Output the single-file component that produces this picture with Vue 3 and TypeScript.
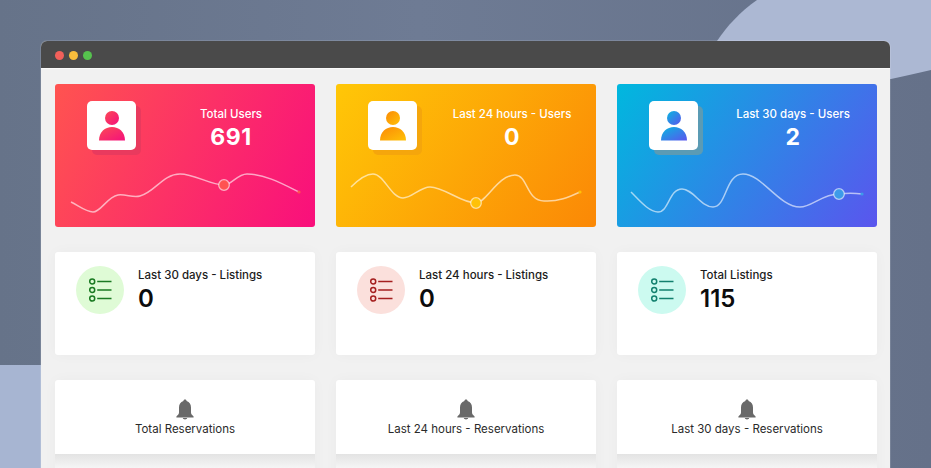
<script setup lang="ts">
type StatCard = {
  title: string
  value: string
  tone: string
  line: string
  dot: [number, number]
  end: [number, number]
}

type ListCard = {
  title: string
  value: string
  tone: string
}

const statCards: StatCard[] = [
  {
    title: 'Total Users',
    value: '691',
    tone: 'red',
    line: 'M16 118 C24 122 31 128 38 128 C46 128 52 113 63 111 C71 110 78 114 85 112 C100 108 108 90 125 90 C140 90 155 101 169 101 C177 101 182 90 192 90 C210 90 228 100 244 108',
    dot: [169, 101],
    end: [244, 108],
  },
  {
    title: 'Last 24 hours - Users',
    value: '0',
    tone: 'amber',
    line: 'M15 103 C22 96 29 90 37 90 C48 90 55 114 67 114 C76 114 84 103 94 103 C108 103 125 119 140 119 C150 119 162 91 179 91 C192 91 190 117 208 117 C222 118 233 113 244 108',
    dot: [140, 119],
    end: [244, 108],
  },
  {
    title: 'Last 30 days - Users',
    value: '2',
    tone: 'blue',
    line: 'M14 108 C22 116 32 128 41 128 C52 128 52 105 65 105 C76 105 84 123 96 123 C110 123 108 90 126 90 C145 90 162 123 183 123 C195 123 205 110 222 110 C230 109 237 109 245 110',
    dot: [222, 110],
    end: [245, 110],
  },
]

const listCards: ListCard[] = [
  { title: 'Last 30 days - Listings', value: '0', tone: 'green' },
  { title: 'Last 24 hours - Listings', value: '0', tone: 'rose' },
  { title: 'Total Listings', value: '115', tone: 'mint' },
]

const reservationCards: string[] = [
  'Total Reservations',
  'Last 24 hours - Reservations',
  'Last 30 days - Reservations',
]
</script>

<template>
  <div class="stage">
    <svg class="blob-top" viewBox="0 0 931 100" width="931" height="100">
      <path d="M757 0 C740 12 727 26 717 41 L717 80 L891 79 C905 76 918 73 931 70 L931 0 Z" fill="#acb8d3" />
    </svg>
    <div class="blob-bottom"></div>

    <div class="window">
      <div class="titlebar">
        <span class="light light-red"></span>
        <span class="light light-yellow"></span>
        <span class="light light-green"></span>
      </div>

      <div class="content">
        <div class="row">
          <div
            v-for="card in statCards"
            :key="card.title"
            class="stat-card"
            :class="`stat-${card.tone}`"
          >
            <svg class="spark" viewBox="0 0 260 142">
              <path :d="card.line" fill="none" stroke="rgba(255,255,255,0.6)" stroke-width="1.5" />
              <circle :cx="card.dot[0]" :cy="card.dot[1]" r="5.3" class="spark-dot" stroke="rgba(255,255,255,0.6)" stroke-width="1.3" />
              <circle :cx="card.end[0]" :cy="card.end[1]" r="1.6" class="spark-dot" />
            </svg>
            <div class="stat-top">
              <div class="avatar">
                <svg viewBox="0 0 28 30" width="28" height="30">
                  <defs>
                    <linearGradient :id="`grad-${card.tone}`" x1="0" y1="0" x2="1" y2="1">
                      <stop offset="0" class="grad-a" />
                      <stop offset="1" class="grad-b" />
                    </linearGradient>
                  </defs>
                  <circle cx="14" cy="7" r="7" :fill="`url(#grad-${card.tone})`" />
                  <path d="M1 29.5 C1 21 7 16 14 16 C21 16 27 21 27 29.5 Z" :fill="`url(#grad-${card.tone})`" />
                </svg>
              </div>
              <div class="stat-text">
                <div class="stat-title">{{ card.title }}</div>
                <div class="stat-value">{{ card.value }}</div>
              </div>
            </div>
          </div>
        </div>

        <div class="row">
          <div v-for="card in listCards" :key="card.title" class="list-card" :class="`list-${card.tone}`">
            <div class="list-icon">
              <svg viewBox="0 0 24 26" width="24" height="26" fill="none" stroke="currentColor" stroke-width="1.5">
                <circle cx="4.2" cy="4.4" r="2.5" />
                <circle cx="4.2" cy="13" r="2.5" />
                <circle cx="4.2" cy="21.6" r="2.5" />
                <path d="M9.2 4.4 H23.5 M9.2 13 H23.5 M9.2 21.6 H23.5" />
              </svg>
            </div>
            <div>
              <div class="list-title">{{ card.title }}</div>
              <div class="list-value">{{ card.value }}</div>
            </div>
          </div>
        </div>

        <div class="row">
          <div v-for="title in reservationCards" :key="title" class="res-card">
            <div class="res-head">
              <svg viewBox="0 0 18 20" width="18" height="21" fill="#696969">
                <path d="M9 0 C10 0 10.6 .7 10.6 1.6 C13.6 2.4 15 5 15 8 V13 C15 15 16.4 15.6 17.6 17 V18 H.4 V17 C1.6 15.6 3 15 3 13 V8 C3 5 4.4 2.4 7.4 1.6 C7.4 .7 8 0 9 0 Z" />
                <path d="M6.8 18.6 H11.2 C11 19.6 10.1 20 9 20 C7.9 20 7 19.6 6.8 18.6 Z" />
              </svg>
              <div class="res-title">{{ title }}</div>
            </div>
            <div class="res-body"></div>
          </div>
        </div>
      </div>
    </div>
  </div>
</template>

<style>
html,
body {
  margin: 0;
  background: #6b7890;
}
</style>

<style scoped>
.stage {
  position: relative;
  width: 931px;
  height: 468px;
  overflow: hidden;
  padding: 41px 41px 0;
  box-sizing: border-box;
  background: linear-gradient(90deg, #667389 0%, #6e7b94 45%, #657189 100%);
  font-family: Inter, "Liberation Sans", sans-serif;
}

.blob-top {
  position: absolute;
  left: 0;
  top: 0;
}

.blob-bottom {
  position: absolute;
  left: 0;
  top: 365px;
  width: 60px;
  height: 103px;
  background: #a7b5d2;
}

.window {
  position: relative;
  width: 849px;
  height: 427px;
  border-radius: 6px 6px 0 0;
  overflow: hidden;
  background: #f1f1f1;
  box-shadow: 0 0 0 1px rgba(255, 255, 255, 0.12);
}

.titlebar {
  display: flex;
  align-items: center;
  gap: 5px;
  height: 28px;
  padding: 1px 0 0 14px;
  background: #4a4a4a;
  border-bottom: 1px solid #fafafa;
  box-sizing: border-box;
}

.light {
  width: 9px;
  height: 9px;
  border-radius: 50%;
}

.light-red {
  background: #f2605a;
}

.light-yellow {
  background: #f8bd3c;
}

.light-green {
  background: #56c24e;
}

.content {
  display: flex;
  flex-direction: column;
  gap: 25px;
  padding: 15px 14px 0;
}

.row {
  display: grid;
  grid-template-columns: repeat(3, 260px);
  column-gap: 21px;
}

.stat-card {
  position: relative;
  height: 143px;
  border-radius: 3px;
  overflow: hidden;
  color: #fff;
}

.stat-red {
  background: linear-gradient(115deg, #ff5350 0%, #f90f7c 100%);
  --a: #fb4a55;
  --b: #f5107c;
  --dot: #ff5350;
  --shade: #e93a5e;
}

.stat-amber {
  background: linear-gradient(125deg, #ffc707 0%, #fb8806 100%);
  --a: #fb8a06;
  --b: #ffc107;
  --dot: #ffc107;
  --shade: #f5a60c;
}

.stat-blue {
  background: linear-gradient(125deg, #00b8de 0%, #5a55ee 100%);
  --a: #08b7e0;
  --b: #5a55ee;
  --dot: #3d9be9;
  --shade: #5b9bb4;
}

.spark {
  position: absolute;
  left: 0;
  top: 0;
  width: 260px;
  height: 142px;
}

.spark-dot {
  fill: var(--dot);
}

.grad-a {
  stop-color: var(--a);
}

.grad-b {
  stop-color: var(--b);
}

.stat-top {
  position: relative;
  display: flex;
  padding: 17px 0 0 32px;
}

.avatar {
  display: flex;
  align-items: center;
  justify-content: center;
  width: 49px;
  height: 49px;
  border-radius: 5px;
  background: #fff;
  box-shadow: 5px 5px 0 var(--shade);
}

.stat-text {
  flex: 1;
  padding-left: 11px;
  text-align: center;
  margin-top: 5px;
}

.stat-title {
  font-size: 11.5px;
  font-weight: 500;
  line-height: 16px;
}

.stat-value {
  font-size: 23px;
  font-weight: 700;
  line-height: 30px;
  letter-spacing: 0.5px;
}

.list-card {
  display: flex;
  gap: 14px;
  height: 103px;
  padding: 14px 0 0 21px;
  box-sizing: border-box;
  border-radius: 3px;
  background: #fff;
  box-shadow: 0 0 14px rgba(0, 0, 0, 0.03);
}

.list-icon {
  display: flex;
  align-items: center;
  justify-content: center;
  width: 48px;
  height: 48px;
  border-radius: 50%;
}

.list-green .list-icon {
  background: #dffbd6;
  color: #1a7a22;
}

.list-rose .list-icon {
  background: #fbe0dc;
  color: #a51f1f;
}

.list-mint .list-icon {
  background: #ccfaf0;
  color: #12806e;
}

.list-title {
  margin-top: 1px;
  font-size: 11.5px;
  font-weight: 500;
  line-height: 16px;
  color: #1c1c1c;
}

.list-value {
  font-size: 24px;
  font-weight: 600;
  line-height: 32px;
  color: #0c0c0c;
}

.res-card {
  display: flex;
  flex-direction: column;
  height: 100px;
  border-radius: 3px;
  background: #fff;
  box-shadow: 0 0 14px rgba(0, 0, 0, 0.03);
}

.res-head {
  display: flex;
  flex-direction: column;
  align-items: center;
  height: 74px;
  padding-top: 19px;
  box-sizing: border-box;
}

.res-title {
  margin-top: 1px;
  font-size: 11.5px;
  line-height: 16px;
  color: #2a2a2a;
}

.res-body {
  flex: 1;
  background: linear-gradient(180deg, #e3e3e3 0%, #f7f7f7 60%);
}
</style>
